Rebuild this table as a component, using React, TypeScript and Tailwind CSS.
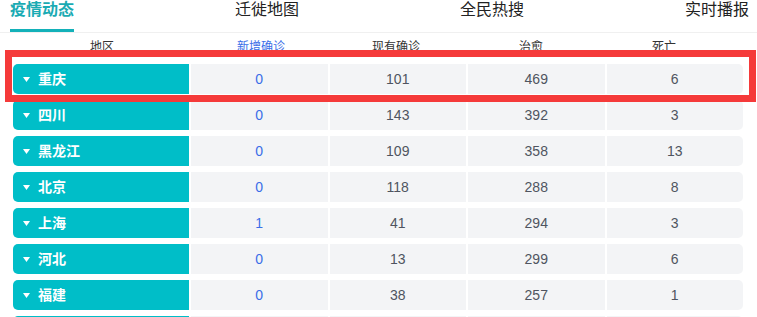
import React from "react";

const rows = [
  { name: "重庆", add: 0, cur: 101, heal: 469, dead: 6 },
  { name: "四川", add: 0, cur: 143, heal: 392, dead: 3 },
  { name: "黑龙江", add: 0, cur: 109, heal: 358, dead: 13 },
  { name: "北京", add: 0, cur: 118, heal: 288, dead: 8 },
  { name: "上海", add: 1, cur: 41, heal: 294, dead: 3 },
  { name: "河北", add: 0, cur: 13, heal: 299, dead: 6 },
  { name: "福建", add: 0, cur: 38, heal: 257, dead: 1 },
];

const tabs = ["疫情动态", "迁徙地图", "全民热搜", "实时播报"];

export default function App() {
  return (
    <div
      className="relative w-[757px] h-[317px] overflow-hidden bg-white"
      style={{ fontFamily: '"Liberation Sans", "Noto Sans CJK SC", sans-serif' }}
    >
      <div className="flex justify-between pl-[10px] pr-[8px] h-[33px] border-b border-[#f0f0f0]">
        {tabs.map((t, i) => (
          <div
            key={t}
            className={
              i === 0
                ? "h-[32px] box-border border-b-[3px] border-[#13b1b9] text-[16px] leading-[20px] font-bold text-[#1aabb3]"
                : "h-[32px] text-[16px] leading-[20px] text-[#222]"
            }
          >
            {t}
          </div>
        ))}
      </div>
      <div className="flex h-[27px] items-center pl-[13px] text-[12px] text-[#333]">
        <div className="w-[178px] text-center">地区</div>
        <div className="w-[140px] text-center text-[#3a6ee8]">新增确诊</div>
        <div className="w-[130px] text-center">现有确诊</div>
        <div className="w-[140px] text-center">治愈</div>
        <div className="w-[126px] text-center">死亡</div>
      </div>
      <div className="flex flex-col gap-[6px] pt-[4px] pl-[13px] pr-[14px]">
        {rows.map((r) => (
          <div key={r.name} className="flex h-[30px] gap-[2px] text-[14px] text-[#4f5460]">
            <div className="w-[176px] shrink-0 flex items-center pl-[10px] gap-[8px] bg-[#00bec8] rounded-l-[5px] text-white font-bold text-[14px]">
              <svg width="7" height="5" viewBox="0 0 7 5">
                <path d="M0 0 L7 0 L3.5 5 Z" fill="#fff" />
              </svg>
              <span>{r.name}</span>
            </div>
            <div className="flex-1 flex items-center justify-center bg-[#f3f4f6] text-[#3a6ee8]">{r.add}</div>
            <div className="flex-1 flex items-center justify-center bg-[#f3f4f6]">{r.cur}</div>
            <div className="flex-1 flex items-center justify-center bg-[#f3f4f6]">{r.heal}</div>
            <div className="flex-1 flex items-center justify-center bg-[#f3f4f6] rounded-r-[5px]">{r.dead}</div>
          </div>
        ))}
        <div className="flex h-[30px] gap-[2px]">
          <div className="w-[176px] shrink-0 bg-[#00bec8] rounded-l-[5px]" />
          <div className="flex-1 bg-[#f3f4f6]" />
          <div className="flex-1 bg-[#f3f4f6]" />
          <div className="flex-1 bg-[#f3f4f6]" />
          <div className="flex-1 bg-[#f3f4f6] rounded-r-[5px]" />
        </div>
      </div>
      <div className="absolute left-[5px] top-[50px] w-[751px] h-[52px] border-[7px] border-[#f53a3a] pointer-events-none" />
    </div>
  );
}
